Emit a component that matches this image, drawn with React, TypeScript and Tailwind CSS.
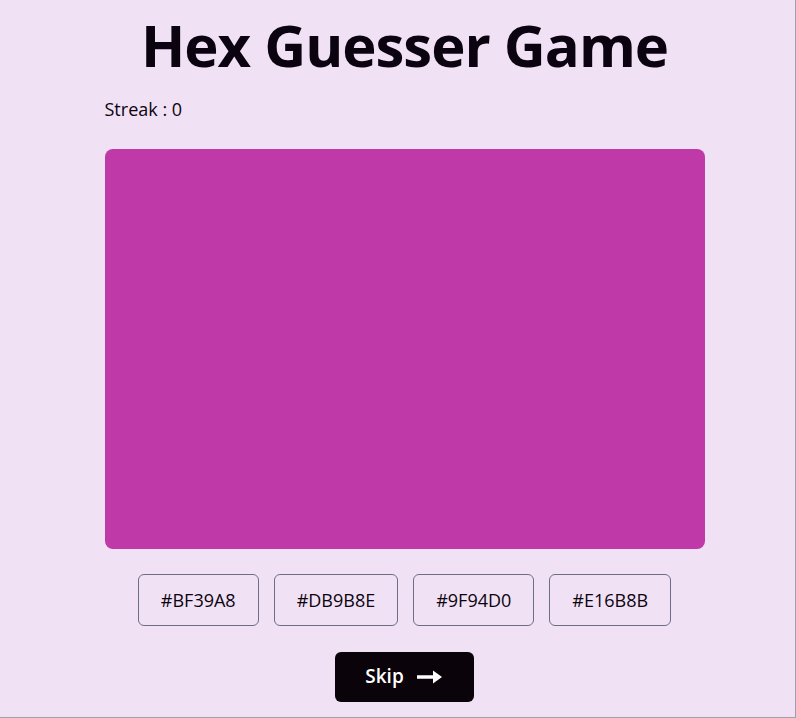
import { useState } from "react";

const options = ["#BF39A8", "#DB9B8E", "#9F94D0", "#E16B8B"];

export default function App() {
  const [streak] = useState(0);
  const color = options[0];

  return (
    <main
      className="min-h-[718px] w-full bg-[#f1e1f4] text-[#0b0410] border-r border-b border-[#a39ea5] flex flex-col items-center pl-[14px]"
      style={{ fontFamily: '"Open Sans", "Noto Sans", sans-serif' }}
    >
      <h1 className="text-[58px] font-bold mt-[10px] leading-[1.2] tracking-[-1px]">
        Hex Guesser Game
      </h1>
      <div className="w-[600px] mt-[15px]">
        <p className="text-lg">Streak : {streak}</p>
      </div>
      {/* the colour to guess */}
      <div
        className="w-[600px] h-[400px] rounded-lg mt-[26px]"
        style={{ backgroundColor: color }}
      ></div>
      <div className="flex gap-[15px] mt-[25px]">
        {options.map((opt) => (
          <button
            key={opt}
            className="h-[52px] px-[22px] text-lg rounded-md border border-[#6b6f86]"
          >
            {opt}
          </button>
        ))}
      </div>
      <button className="mt-[26px] w-[139px] h-[50px] rounded-md bg-[#0a0309] text-white text-[19px] font-semibold flex items-center justify-center gap-3">
        Skip
        <svg width="28" height="16" viewBox="0 0 28 16" fill="none">
          <path d="M1 8h21" stroke="white" strokeWidth="3.5" />
          <path d="M17 1.5 26 8l-9 6.5z" fill="white" />
        </svg>
      </button>
    </main>
  );
}
